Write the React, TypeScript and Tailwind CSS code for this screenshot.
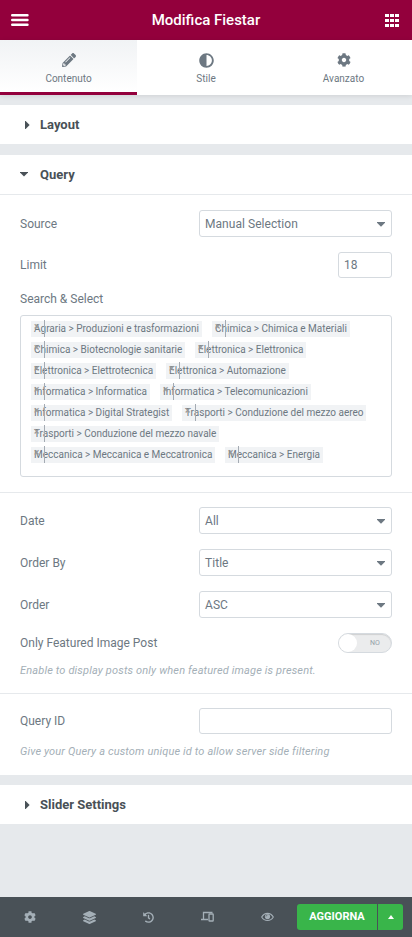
import React from "react";
import { FaPencilAlt, FaAdjust, FaCog, FaLayerGroup, FaHistory } from "react-icons/fa";

const TAG_ROWS: { text: string; w: string }[][] = [
  [
    { text: "Agraria > Produzioni e trasformazioni", w: "w-[171px]" },
    { text: "Chimica > Chimica e Materiali", w: "w-[138px]" },
  ],
  [
    { text: "Chimica > Biotecnologie sanitarie", w: "w-[154px]" },
    { text: "Elettronica > Elettronica", w: "w-[111px]" },
  ],
  [
    { text: "Elettronica > Elettrotecnica", w: "w-[125px]" },
    { text: "Elettronica > Automazione", w: "w-[123px]" },
  ],
  [
    { text: "Informatica > Informatica", w: "w-[119px]" },
    { text: "Informatica > Telecomunicazioni", w: "w-[151px]" },
  ],
  [
    { text: "Informatica > Digital Strategist", w: "w-[141px]" },
    { text: "Trasporti > Conduzione del mezzo aereo", w: "w-[184px]" },
  ],
  [{ text: "Trasporti > Conduzione del mezzo navale", w: "w-[188px]" }],
  [
    { text: "Meccanica > Meccanica e Meccatronica", w: "w-[184px]" },
    { text: "Meccanica > Energia", w: "w-[98px]" },
  ],
];

function Tag({ text, w }: { text: string; w: string }) {
  return (
    <span className={`relative block h-4 shrink-0 bg-[#f1f3f5] pl-[3px] text-[10px] leading-4 whitespace-nowrap ${w}`}>
      <span className="absolute top-[-1px] left-0 h-[17px] w-[14px] border-r border-[#a4abb3] pl-[3px] text-[10px] leading-[14px] font-bold text-[#999999]">×</span>
      {text}
    </span>
  );
}

function Section({ title, open = false }: { title: string; open?: boolean }) {
  return (
    <div className="flex h-[39px] items-center bg-white text-[13px] font-bold text-[#495157]">
      <span className="flex w-10 shrink-0 pl-5">
        {open ? (
          <svg width="8" height="5" viewBox="0 0 8 5"><path d="M0 0h8v.6L4 4.600 0 .6z" fill="currentColor" /></svg>
        ) : (
          <svg className="ml-[4.500px]" width="5" height="8" viewBox="0 0 5 8"><path d="M0 0h.6L4.600 4 .6 8H0z" fill="currentColor" /></svg>
        )}
      </span>
      {title}
    </div>
  );
}

function Row({ label, children, className = "" }: { label: string; children: React.ReactNode; className?: string }) {
  return (
    <div className={`flex items-center justify-between text-[12px] ${className}`}>
      <span>{label}</span>
      {children}
    </div>
  );
}

function Select({ value }: { value: string }) {
  return (
    <div className="flex h-[27px] w-[193px] items-center justify-between rounded-[3px] border border-[#d5dadf] pr-[6px] pl-[5px] text-[12px]">
      <span className="tracking-[0.05px]">{value}</span>
      <svg className="mt-px" width="8" height="5" viewBox="0 0 8 5"><path d="M0 0h8v.8L4 4.800 0 .8z" fill="#6d7882" /></svg>
    </div>
  );
}

export default function App() {
  return (
    <div className="flex h-[937px] w-[412px] flex-col overflow-hidden bg-[#e6e9ec] text-[#6d7882]" style={{ fontFamily: "Roboto, sans-serif" }}>
      <header className="flex h-10 shrink-0 items-center justify-between bg-[#93003c] pr-[13px] pl-[11px] text-white">
        <svg width="18" height="12" viewBox="0 0 18 12"><path d="M1.200 1.300h15.300M1.200 6h15.300M1.200 10.700h15.300" stroke="currentColor" strokeWidth="2.400" strokeLinecap="round" /></svg>
        <h1 className="-ml-[2px] text-[15px] font-medium">Modifica Fiestar</h1>
        <svg width="14" height="13" viewBox="0 0 14 13" fill="currentColor">
          <path d="M0 0h4v3H0zM5 0h4v3H5zM10 0h4v3h-4zM0 5h4v3H0zM5 5h4v3H5zM10 5h4v3h-4zM0 10h4v3H0zM5 10h4v3H5zM10 10h4v3h-4z" />
        </svg>
      </header>

      <nav className="z-10 grid h-[55px] shrink-0 grid-cols-[137px_138px_137px] bg-white text-[10px] shadow-[0_1px_5px_rgba(0,0,0,0.1)]">
        <div className="flex flex-col items-center border-b-[3px] border-[#93003c] bg-gradient-to-b from-[#f1f3f5] to-white pt-[13px]">
          <FaPencilAlt size={14} />
          <span className="mt-[6px] leading-3">Contenuto</span>
        </div>
        <div className="flex flex-col items-center pt-[13px]">
          <FaAdjust size={15} />
          <span className="mt-[5px] leading-3">Stile</span>
        </div>
        <div className="flex flex-col items-center pt-[13px]">
          <FaCog size={14} />
          <span className="mt-[6px] leading-3">Avanzato</span>
        </div>
      </nav>

      <main className="mt-[10px] flex flex-col">
        <Section title="Layout" />
        <div className="h-[11px]" />
        <Section title="Query" open />
        <div className="flex flex-col border-t border-[#e6e9ec] bg-white px-5 pt-[15px] pb-[15px]">
          <Row label="Source" className="h-[27px]"><Select value="Manual Selection" /></Row>
          <Row label="Limit" className="mt-[15px] h-[26px]">
            <div className="flex h-[26px] w-[54px] items-center rounded-[3px] border border-[#d5dadf] pl-[5px] text-[12px]">18</div>
          </Row>
          <div className="mt-[13px] text-[12px] leading-4">Search &amp; Select</div>
          <div className="mt-2 flex h-[162px] flex-col gap-[5px] rounded-[3px] border border-[#d5dadf] pt-[5px] pl-[10px]">
            {TAG_ROWS.map((row, i) => (
              <div key={i} className="flex gap-[10px]">
                {row.map((tag) => <Tag key={tag.text} {...tag} />)}
              </div>
            ))}
          </div>
        </div>
        <div className="flex flex-col border-t border-[#e6e9ec] bg-white px-5 pt-[14px] pb-[14px]">
          <Row label="Date" className="h-[27px]"><Select value="All" /></Row>
          <Row label="Order By" className="mt-[15px] h-[27px]"><Select value="Title" /></Row>
          <Row label="Order" className="mt-[15px] h-[27px]"><Select value="ASC" /></Row>
          <Row label="Only Featured Image Post" className="mt-[15px] h-5">
            <div className="flex h-5 w-[54px] items-center rounded-full border border-[#d5dadf] bg-[#ebeced] shadow-[inset_0_1px_1px_rgba(0,0,0,0.12)]">
              <span className="h-[18px] w-[18px] rounded-full bg-white" />
              <span className="ml-[13px] text-[7px] text-[#95a0a9]">NO</span>
            </div>
          </Row>
          <p className="mt-[10px] text-[11px] leading-4 tracking-[0.155px] whitespace-nowrap text-[#a4afb7] italic">Enable to display posts only when featured image is present.</p>
        </div>
        <div className="flex flex-col border-t border-[#e6e9ec] bg-white px-5 pt-[14px] pb-[15px]">
          <Row label="Query ID" className="h-[26px]">
            <div className="h-[26px] w-[193px] rounded-[3px] border border-[#d5dadf]" />
          </Row>
          <p className="mt-[10px] text-[11px] leading-4 tracking-[0.14px] whitespace-nowrap text-[#a4afb7] italic">Give your Query a custom unique id to allow server side filtering</p>
        </div>
        <div className="h-[10px]" />
        <Section title="Slider Settings" />
      </main>

      <footer className="mt-auto flex h-10 shrink-0 items-center bg-[#495157] pr-[9px] text-[#a4afb7]">
        <div className="grid flex-1 grid-cols-5 items-center justify-items-center">
          <FaCog size={12} />
          <FaLayerGroup size={13} />
          <FaHistory size={11} />
          <svg width="13" height="12" viewBox="0 0 13 12" fill="none" stroke="currentColor" strokeWidth="1.3">
            <path d="M2.500 8V1.500h9M0 8.500h7" /><rect x="8" y="3" width="4.200" height="7" rx="0.600" />
          </svg>
          <svg width="13" height="10" viewBox="0 0 13 10" fill="none" stroke="currentColor">
            <path d="M.7 5C3.400.1 9.600.1 12.300 5 9.600 9.700 3.400 9.700.7 5z" strokeWidth="1.1" />
            <circle cx="6.500" cy="4.600" r="2.600" fill="currentColor" stroke="none" />
            <path d="M5 4.500A1.500 1.500 0 0 1 6.500 3" stroke="#495157" strokeWidth=".6" />
          </svg>
        </div>
        <div className="flex h-[26px] gap-px text-white">
          <button className="w-20 rounded-l-[3px] bg-[#39b54a] text-[11px] font-bold">AGGIORNA</button>
          <button className="flex w-[25px] items-center justify-center rounded-r-[3px] bg-[#39b54a]">
            <svg width="6" height="4" viewBox="0 0 6 4"><path d="M0 4h6L3 0z" fill="currentColor" /></svg>
          </button>
        </div>
      </footer>
    </div>
  );
}
